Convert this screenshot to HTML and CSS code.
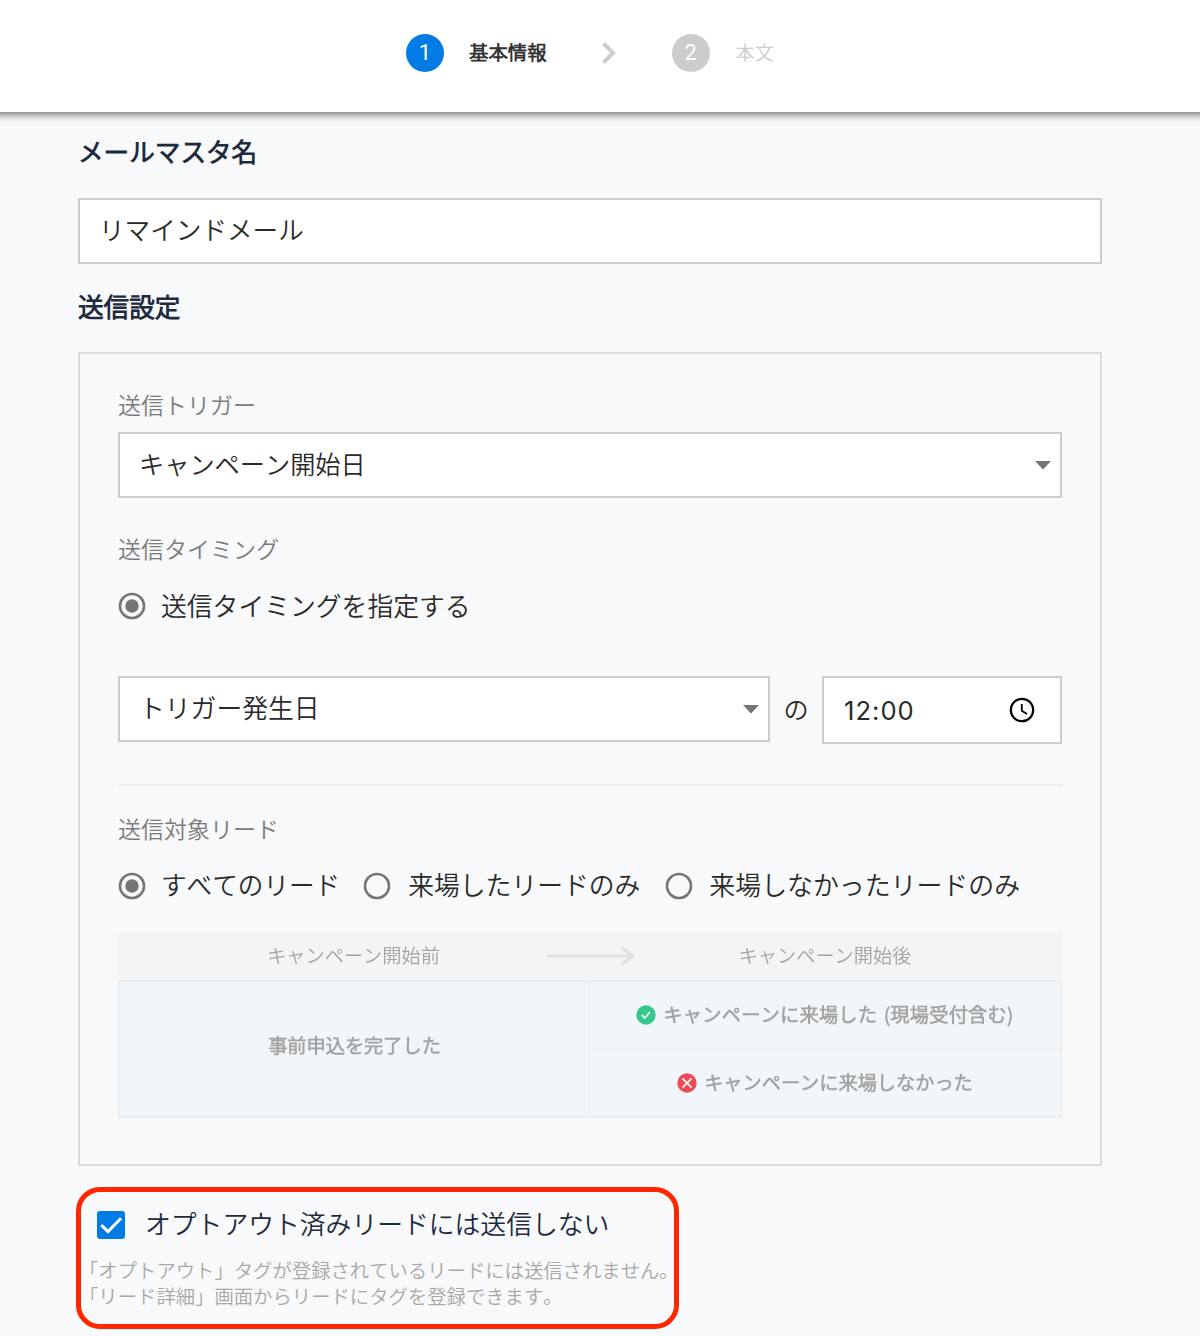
FILE: index.html
```html
<!DOCTYPE html>
<html lang="ja">
<head>
<meta charset="utf-8">
<title>メールマスタ</title>
<link rel="stylesheet" href="styles.css">
</head>
<body>
<header class="steps">
  <span class="step-number active">1</span>
  <span class="step-label current">基本情報</span>
  <svg class="chevron" width="16" height="22" viewBox="0 0 16 22"><path d="M2.5 1.5 12 11 2.5 20.5" fill="none" stroke="#ccc" stroke-width="4"/></svg>
  <span class="step-number">2</span>
  <span class="step-label">本文</span>
</header>
<main class="form">
  <h2 class="heading">メールマスタ名</h2>
  <div class="field name-field"><span class="field-text">リマインドメール</span></div>
  <h2 class="heading second">送信設定</h2>
  <section class="panel">
    <div class="label">送信トリガー</div>
    <div class="field select trigger"><span class="field-text">キャンペーン開始日</span><svg class="caret" width="16" height="9" viewBox="0 0 16 9"><path d="M0 0H16L8 8.5Z" fill="#757575"/></svg></div>
    <div class="label timing-label">送信タイミング</div>
    <div class="radio-row timing-radio">
      <svg class="radio" viewBox="0 0 28 28"><circle cx="14" cy="14" r="12" fill="none" stroke="#757575" stroke-width="2.6"/><circle cx="14" cy="14" r="6.7" fill="#757575"/></svg>
      <span class="option">送信タイミングを指定する</span>
    </div>
    <div class="timing">
      <div class="field select day"><span class="field-text">トリガー発生日</span><svg class="caret" width="16" height="9" viewBox="0 0 16 9"><path d="M0 0H16L8 8.5Z" fill="#757575"/></svg></div>
      <span class="particle">の</span>
      <div class="field time"><span class="time-text">12:00</span><svg width="26" height="26" viewBox="0 0 26 26"><circle cx="13" cy="13" r="11.2" fill="none" stroke="#000" stroke-width="2.2"/><path d="M12.8 7V13.8L18 17" fill="none" stroke="#000" stroke-width="1.8"/></svg></div>
    </div>
    <div class="divider"></div>
    <div class="label lead-label">送信対象リード</div>
    <div class="radio-row lead-radios">
      <svg class="radio" viewBox="0 0 28 28"><circle cx="14" cy="14" r="12" fill="none" stroke="#757575" stroke-width="2.6"/><circle cx="14" cy="14" r="6.7" fill="#757575"/></svg>
      <span class="option all">すべてのリード</span>
      <svg class="radio" viewBox="0 0 28 28"><circle cx="14" cy="14" r="12" fill="none" stroke="#757575" stroke-width="2.6"/></svg>
      <span class="option visited">来場したリードのみ</span>
      <svg class="radio" viewBox="0 0 28 28"><circle cx="14" cy="14" r="12" fill="none" stroke="#757575" stroke-width="2.6"/></svg>
      <span class="option absent">来場しなかったリードのみ</span>
    </div>
    <div class="diagram">
      <div class="diagram-head">
        <span class="soft">キャンペーン開始前</span>
        <svg class="soft" width="88" height="20" viewBox="0 0 88 20"><path d="M1 10H87M76 2 87 10 76 18" fill="none" stroke="#e1e1e1" stroke-width="2.8"/></svg>
        <span class="soft">キャンペーン開始後</span>
      </div>
      <div class="diagram-body">
        <div class="cell before"><span class="soft">事前申込を完了した</span></div>
        <div class="cell visited-cell"><svg class="soft" width="20" height="20" viewBox="0 0 20 20"><circle cx="10" cy="10" r="9.7" fill="#36c78c"/><path d="M5.8 10.2 8.8 13 14 7" fill="none" stroke="#e5fff4" stroke-width="1.8"/></svg><span class="soft">キャンペーンに来場した (現場受付含む)</span></div>
        <div class="cell absent-cell"><svg class="soft" width="20" height="20" viewBox="0 0 20 20"><circle cx="10" cy="10" r="9.7" fill="#eb4b56"/><path d="M5.5 5.5 14.5 14.5M14.5 5.5 5.5 14.5" fill="none" stroke="#ffe5e8" stroke-width="1.8"/></svg><span class="soft">キャンペーンに来場しなかった</span></div>
      </div>
    </div>
  </section>
  <section class="optout">
    <div class="check-row">
      <svg width="28" height="28" viewBox="0 0 28 28"><rect width="28" height="28" rx="3" fill="#027be5"/><path d="M4.3 14.2 11 20.6 24 7.2" fill="none" stroke="#fff" stroke-width="3"/></svg>
      <span>オプトアウト済みリードには送信しない</span>
    </div>
    <p class="note">「オプトアウト」タグが登録されているリードには送信されません。<br>「リード詳細」画面からリードにタグを登録できます。</p>
  </section>
</main>
</body>
</html>
```

FILE: styles.css
```css
* { box-sizing: border-box; }
body {
  margin: 0;
  height: 1336px;
  overflow: hidden;
  background: #f8f9fb;
  color: #2a2a2a;
  font-family: "Noto Sans CJK JP DemiLight", "Noto Sans CJK JP", sans-serif;
  font-weight: 350;
  font-kerning: none;
  white-space: nowrap;
}
svg { display: block; flex: none; }
.steps {
  height: 112px;
  margin: 0 -20px;
  padding: 34px 0 0 426px;
  display: flex;
  align-items: flex-start;
  background: #fff;
  box-shadow: 0 1px 8px 1px rgba(0, 0, 0, .6);
}
.step-number {
  width: 38px;
  height: 38px;
  border-radius: 50%;
  background: #ccc;
  color: #fff;
  font: 400 22px/37px Roboto, sans-serif;
  text-align: center;
}
.step-number.active { background: #027be5; }
.step-label {
  margin-left: 26px;
  font-size: 19.2px;
  line-height: 37px;
  color: #ccc;
}
.step-label.current { margin-left: 25px; font-size: 19.4px; line-height: 36px; color: #333; font-weight: 700; }
.chevron { margin: 8px 55px 0 54px; }
.form { padding: 0 98px 0 78px; }
.heading {
  margin: 0;
  padding-top: 19px;
  height: 86px;
  font-size: 25.6px;
  line-height: 40px;
  font-weight: 700;
  color: #1e2a3e;
}
.heading.second { padding-top: 22px; height: 88px; }
.field {
  height: 66px;
  border: 2px solid #ccc;
  background: #fff;
  padding-left: 20px;
  display: flex;
  align-items: center;
}
.field-text { font-size: 25.6px; line-height: 40px; margin-bottom: 5px; margin-left: -1px; }
.trigger .field-text { font-size: 25.2px; }
.day .field-text { font-size: 25.8px; }
.panel {
  height: 814px;
  border: 2px solid #d9dbdd;
  padding: 32px 38px 0;
}
.label {
  font-size: 23px;
  line-height: 36px;
  height: 46px;
  color: #7c7c7c;
}
.select { justify-content: space-between; padding-right: 9px; }
.timing-label { margin-top: 32px; }
.radio-row { display: flex; align-items: center; height: 36px; }
.radio { width: 28px; height: 28px; }
.option { font-size: 25.8px; line-height: 36px; margin: -2px 0 0 15px; }
.lead-radios .option { margin-top: -5px; }
.timing-radio { margin-top: 12px; }
.timing { display: flex; align-items: flex-start; margin-top: 52px; }
.day { width: 652px; }
.particle {
  width: 52px;
  font-size: 25.2px;
  line-height: 64px;
  text-align: center;
}
.time { flex: 1; height: 68px; justify-content: space-between; padding-right: 25px; }
.time-text { font: 400 25.6px/36px Inter, sans-serif; letter-spacing: 1px; margin-top: 2px; }
.divider { height: 2px; margin-top: 40px; background: #ebedef; }
.lead-label { margin-top: 24px; height: 58px; }
.lead-radios .all { margin-right: 23px; font-size: 25.6px; }
.lead-radios .visited { margin: -5px 25px 0 17px; }
.lead-radios .absent { margin-left: 16px; font-size: 25.9px; }
.diagram { margin-top: 28px; height: 186px; font-size: 19.2px; color: #a4a4a4; font-weight: 400; }
.diagram-head {
  display: grid;
  grid-template-columns: 1fr 88px 1fr;
  align-items: center;
  justify-items: center;
  height: 48px;
  background: #f4f4f4;
}
.diagram-head span { line-height: 30px; margin-top: -3px; }
.diagram-head span:first-child { margin-left: 43px; }
.diagram-head span:last-child { margin-right: 46px; }
.diagram-body {
  display: grid;
  grid-template-columns: 469px 1fr;
  grid-template-rows: 1fr 1fr;
  gap: 1px;
  height: 138px;
  padding: 1px;
  border: 1px solid #eceeef;
  background: #eceeef;
}
.cell {
  display: flex;
  align-items: center;
  justify-content: center;
  gap: 7px;
  background: #f0f6fa;
  font-weight: 700;
}
.visited-cell span { word-spacing: 2px; letter-spacing: .25px; }
.before { grid-row: span 2; padding: 0 0 6px; }
.cell span { line-height: 30px; margin-top: -3px; }
.absent-cell span { margin-top: -2px; }
.soft { filter: blur(.4px); }
.optout {
  width: 603px;
  height: 142px;
  margin: 21px 0 0 -2px;
  border: 5px solid #ff2600;
  border-radius: 24px;
  padding: 14px 0 0;
}
.check-row {
  display: flex;
  align-items: center;
  gap: 20px;
  padding-left: 16px;
  height: 38px;
  font-size: 25.8px;
  line-height: 36px;
  color: #1e2a3e;
}
.check-row span { margin-top: -4px; }
.note {
  margin: 13px 0 0 -2px;
  font-size: 19.35px;
  line-height: 26px;
  color: #a8a8a8;
}
```
